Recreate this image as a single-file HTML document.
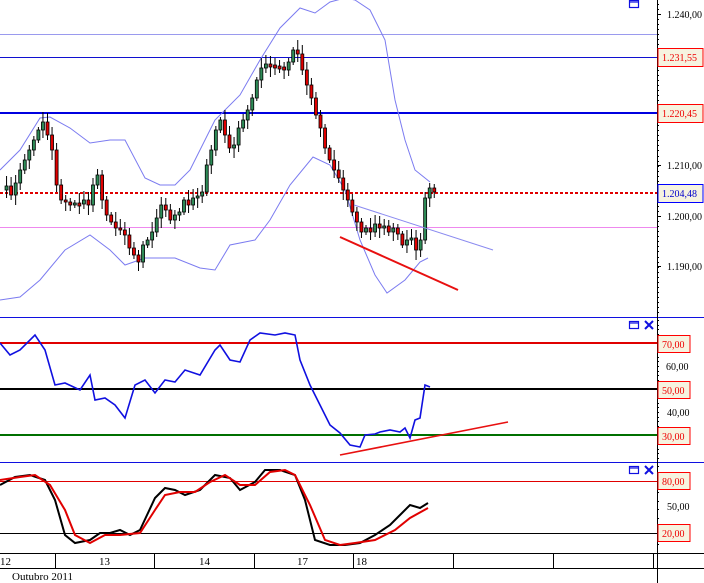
<!DOCTYPE html>
<html><head><meta charset="utf-8"><style>
html,body{margin:0;padding:0;background:#fff;}
svg{display:block;font-family:"Liberation Serif",serif;}
</style></head><body>
<svg id="s" width="704" height="583" viewBox="0 0 704 583" xmlns="http://www.w3.org/2000/svg">
<rect width="704" height="583" fill="#fff"/>
<line x1="0" y1="34.5" x2="657" y2="34.5" stroke="#9a9aee" stroke-width="1"/>
<line x1="0" y1="57.5" x2="657" y2="57.5" stroke="#1010d0" stroke-width="1"/>
<line x1="0" y1="113" x2="657" y2="113" stroke="#0000e0" stroke-width="2"/>
<line x1="0" y1="193" x2="657" y2="193" stroke="#e00000" stroke-width="2" stroke-dasharray="3,2"/>
<line x1="0" y1="227.5" x2="657" y2="227.5" stroke="#ee88ee" stroke-width="1"/>
<polyline fill="none" stroke="#7b7bf0" stroke-width="1" points="0,170 20,150 40,118 50,117 70,128 90,143 110,140 125,140 145,178 160,185 175,185 190,170 215,120 240,95 260,60 280,28 300,8 315,13 330,2 345,-2 355,0 370,10 385,40 395,100 405,140 415,170 425,178 430,182"/>
<polyline fill="none" stroke="#7b7bf0" stroke-width="1" points="0,300 20,297 40,280 65,250 90,235 110,250 125,265 145,258 175,258 200,268 215,270 230,245 255,240 270,220 290,185 313,157 330,165 345,190 360,240 375,275 387,293 405,280 420,262 428,258"/>
<g id="candles"></g>
<line x1="354" y1="205" x2="493" y2="250" stroke="#8a8af0" stroke-width="1"/>
<line x1="340" y1="237" x2="458" y2="290" stroke="#e81010" stroke-width="2"/>
<line x1="0" y1="317.5" x2="704" y2="317.5" stroke="#1010e0" stroke-width="1"/>
<line x1="0" y1="462.5" x2="704" y2="462.5" stroke="#1010e0" stroke-width="1"/>
<line x1="0" y1="343" x2="657" y2="343" stroke="#e00000" stroke-width="2"/>
<line x1="0" y1="389" x2="657" y2="389" stroke="#000" stroke-width="2"/>
<line x1="0" y1="435" x2="657" y2="435" stroke="#007000" stroke-width="2"/>
<polyline fill="none" stroke="#1010e0" stroke-width="1.6" points="0,343 10,355 20,350 35,335 45,350 55,385 65,383 80,390 90,375 95,400 105,398 115,405 125,418 135,385 145,380 155,393 165,380 175,382 185,370 200,375 215,350 220,345 230,360 240,362 250,340 260,333 275,335 285,333 295,335 300,360 310,385 320,405 330,425 340,433 350,445 360,447 365,435 375,434 380,432 390,430 400,432 405,428 410,438 415,420 420,418 425,385 430,387"/>
<line x1="340" y1="455" x2="508" y2="422" stroke="#e81010" stroke-width="1.6"/>
<line x1="0" y1="481.5" x2="657" y2="481.5" stroke="#e00000" stroke-width="1"/>
<line x1="0" y1="533.5" x2="657" y2="533.5" stroke="#000" stroke-width="1"/>
<polyline fill="none" stroke="#000" stroke-width="2" points="0,485 15,477 30,475 45,480 55,500 65,535 75,543 90,540 100,533 110,533 120,530 130,535 140,530 155,498 165,488 175,490 185,495 200,490 215,475 230,478 240,490 255,482 265,470 280,470 295,475 305,500 315,540 330,545 345,545 360,543 375,535 390,525 400,515 410,505 420,508 428,503"/>
<polyline fill="none" stroke="#e00000" stroke-width="2" points="0,480 20,477 35,475 50,485 65,510 75,535 90,543 105,535 120,535 140,533 155,510 165,495 180,492 195,492 210,482 225,475 240,485 255,485 270,472 285,470 295,475 310,505 325,540 340,545 355,543 375,540 395,530 410,518 428,508"/>
<line x1="0" y1="553.5" x2="704" y2="553.5" stroke="#000"/>
<line x1="0" y1="568.5" x2="704" y2="568.5" stroke="#000"/>
<g stroke="#000"><line x1="55.5" y1="553" x2="55.5" y2="568"/><line x1="154.5" y1="553" x2="154.5" y2="568"/><line x1="254.5" y1="553" x2="254.5" y2="568"/><line x1="353.5" y1="553" x2="353.5" y2="568"/><line x1="453.5" y1="553" x2="453.5" y2="568"/><line x1="553.5" y1="553" x2="553.5" y2="568"/><line x1="653.5" y1="553" x2="653.5" y2="568"/></g>
<g font-size="11" fill="#000"><text x="0" y="565">12</text><text x="99" y="565">13</text><text x="199" y="565">14</text><text x="297" y="565">17</text><text x="356" y="565">18</text><text x="12" y="580">Outubro 2011</text></g>
<line x1="657.5" y1="0" x2="657.5" y2="583" stroke="#000"/>
<g id="ticks" stroke="#000"></g>
<g font-size="10" fill="#000"><text x="667" y="18">1.240,00</text><text x="667" y="169">1.210,00</text><text x="667" y="220">1.200,00</text><text x="667" y="270">1.190,00</text><text x="666" y="370">60,00</text><text x="667" y="416">40,00</text><text x="667" y="510">50,00</text></g>
<g font-size="10">
<rect x="658" y="48.5" width="45" height="18" fill="#f6f3e0" stroke="#f00"/><text x="662" y="61" fill="#e00">1.231,55</text>
<rect x="658" y="104.5" width="45" height="18" fill="#f6f3e0" stroke="#f00"/><text x="662" y="117" fill="#e00">1.220,45</text>
<rect x="658" y="184.5" width="45" height="18" fill="#f6f3e0" stroke="#00f"/><text x="662" y="197" fill="#00c">1.204,48</text>
<rect x="658" y="335.5" width="32" height="17" fill="#f6f3e0" stroke="#f00"/><text x="662" y="348" fill="#e00">70,00</text>
<rect x="658" y="381.5" width="32" height="17" fill="#f6f3e0" stroke="#f00"/><text x="662" y="394" fill="#e00">50,00</text>
<rect x="658" y="427.5" width="32" height="17" fill="#f6f3e0" stroke="#f00"/><text x="662" y="440" fill="#e00">30,00</text>
<rect x="658" y="472.5" width="32" height="17" fill="#f6f3e0" stroke="#f00"/><text x="662" y="485" fill="#e00">80,00</text>
<rect x="658" y="524.5" width="32" height="17" fill="#f6f3e0" stroke="#f00"/><text x="662" y="537" fill="#e00">20,00</text>
</g>
<g stroke="#1010e0" fill="none" stroke-width="1.2">
<rect x="629.5" y="0.5" width="9" height="7"/><line x1="629.5" y1="2" x2="638.5" y2="2"/>
<rect x="629.5" y="321.5" width="9" height="7"/><line x1="629.5" y1="323" x2="638.5" y2="323"/>
<rect x="629.5" y="466.5" width="9" height="7"/><line x1="629.5" y1="468" x2="638.5" y2="468"/>
<path d="M645,321 L653,329 M653,321 L645,329 M645,466 L653,474 M653,466 L645,474" stroke-width="2"/>
</g>
</svg>
<script>
(function(){
var ns="http://www.w3.org/2000/svg";
var c=[190,186,195,183,170,160,150,140,130,122,135,150,185,200,202,205,203,204,200,205,185,175,200,215,222,228,230,235,248,255,262,245,240,232,218,205,210,220,215,212,200,205,198,196,192,165,150,130,120,135,148,145,128,120,110,98,80,68,64,65,66,67,70,62,50,54,70,85,98,115,128,148,160,170,178,190,200,212,222,232,228,232,224,228,226,232,228,234,245,240,238,250,240,198,188,192];
var g=document.getElementById("candles");
for(var i=1;i<c.length;i++){
 var x=2+i*4.55, o=c[i-1], cl=c[i];
 var tp=Math.min(o,cl), bt=Math.max(o,cl);
 if(bt-tp<2){bt=tp+3;}
 var w=document.createElementNS(ns,"line");
 w.setAttribute("x1",x);w.setAttribute("x2",x);
 w.setAttribute("y1",tp-3-(i*7%8));w.setAttribute("y2",bt+3+(i*5%8));
 w.setAttribute("stroke","#000");g.appendChild(w);
 var r=document.createElementNS(ns,"rect");
 r.setAttribute("x",x-1.5);r.setAttribute("width",3);
 r.setAttribute("y",tp);r.setAttribute("height",bt-tp);
 r.setAttribute("fill",cl<o?"#2e8b57":"#e00000");
 r.setAttribute("stroke","#000");r.setAttribute("stroke-width","0.8");
 g.appendChild(r);
}
var t=document.getElementById("ticks");
function tk(y,l){var e=document.createElementNS(ns,"line");e.setAttribute("x1",657);e.setAttribute("x2",657+l);e.setAttribute("y1",y);e.setAttribute("y2",y);t.appendChild(e);}
for(var y=4;y<316;y+=5.05){tk(Math.round(y)+0.5,2);}
tk(14.5,4);tk(165.5,4);tk(216.5,4);tk(266.5,4);
for(var y=320;y<462;y+=4.6){tk(Math.round(y)+0.5,2);}
for(var y=466;y<552;y+=8.7){tk(Math.round(y)+0.5,2);}
})();
</script>
</body></html>
